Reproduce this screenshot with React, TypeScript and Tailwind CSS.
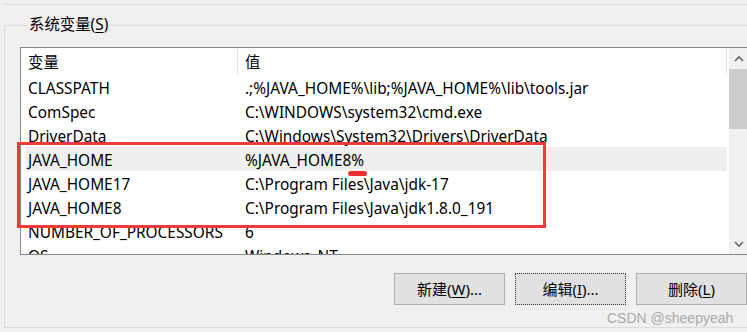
import React from 'react';

type Row = { name: string; value: string };

const ROWS: Row[] = [
  { name: 'CLASSPATH', value: '.;%JAVA_HOME%\\lib;%JAVA_HOME%\\lib\\tools.jar' },
  { name: 'ComSpec', value: 'C:\\WINDOWS\\system32\\cmd.exe' },
  { name: 'DriverData', value: 'C:\\Windows\\System32\\Drivers\\DriverData' },
  { name: 'JAVA_HOME', value: '%JAVA_HOME8%' },
  { name: 'JAVA_HOME17', value: 'C:\\Program Files\\Java\\jdk-17' },
  { name: 'JAVA_HOME8', value: 'C:\\Program Files\\Java\\jdk1.8.0_191' },
  { name: 'NUMBER_OF_PROCESSORS', value: '6' },
  { name: 'OS', value: 'Windows_NT' },
];

const Chevron = ({ up }: { up?: boolean }) => (
  <svg width="10" height="6" viewBox="0 0 10 6" className="block">
    <path
      d={up ? 'M1 5 L5 1 L9 5' : 'M1 1 L5 5 L9 1'}
      fill="none"
      stroke="#606060"
      strokeWidth="1.6"
    />
  </svg>
);

const Button = ({ label, hotkey, tail, focused }: { label: string; hotkey: string; tail: string; focused?: boolean }) => (
  <button
    className={`h-[32px] w-[111px] shrink-0 bg-[#e1e1e1] text-[15px] text-black flex items-center justify-center ${
      focused ? 'border border-dotted border-[#333]' : 'border border-[#adadad]'
    }`}
  >
    {label}(<span className="underline underline-offset-2">{hotkey}</span>){tail}
  </button>
);

const App: React.FC = () => {
  return (
    <div
      className="relative w-[747px] h-[332px] overflow-hidden bg-[#f0f0f0] text-black"
      style={{ fontFamily: '"Noto Sans", "Noto Sans CJK SC", sans-serif' }}
    >
      {/* previous group box edge */}
      <div className="h-[5px] ml-[4px] border-b border-[#dcdcdc]" />

      <fieldset className="mt-[10px] ml-[4px] w-[780px] h-[313px] border border-[#dcdcdc] pl-[15px] pr-0">
        <legend className="ml-[8px] px-[1px] text-[15.4px] leading-[20px]">
          系统变量(<span className="underline underline-offset-2">S</span>)
        </legend>

        <div className="mt-[12px] h-[208px] w-[760px] border border-[#828790] bg-white flex overflow-hidden">
          <div className="w-[706px] shrink-0 text-[15.4px] leading-[20px]">
            {/* header */}
            <div className="h-[27px] flex">
              <div className="w-[217px] h-full pl-[7px] pt-[5px] border-r border-[#e5e5e5]">变量</div>
              <div className="flex-1 h-full pl-[7px] pt-[5px] border-r border-[#e5e5e5]">值</div>
            </div>
            {ROWS.map((r) => (
              <div
                key={r.name}
                className={`h-[24px] ml-[5px] pt-[4px] flex ${r.name === 'JAVA_HOME' ? 'bg-[#efefef]' : ''}`}
              >
                <div className="w-[212px] pl-[2px] whitespace-nowrap">{r.name}</div>
                <div className="pl-[7px] whitespace-nowrap">{r.value}</div>
              </div>
            ))}
          </div>
          <div className="w-[2px] shrink-0" />
          <div className="w-[20px] shrink-0 bg-[#f0f0f0] flex flex-col">
            <div className="h-[21px] flex items-center justify-center">
              <Chevron up />
            </div>
            <div className="h-[60px] bg-[#cdcdcd]" />
            <div className="flex-1" />
            <div className="h-[21px] flex items-center justify-center">
              <Chevron />
            </div>
          </div>
        </div>

        <div className="mt-[18px] ml-[374px] flex gap-[10px]">
          <Button label="新建" hotkey="W" tail="..." />
          <Button label="编辑" hotkey="I" tail="..." focused />
          <Button label="删除" hotkey="L" tail="" />
        </div>
      </fieldset>

      {/* annotation overlay */}
      <div className="absolute left-[17px] top-[142px] w-[529px] h-[86px] border-[3px] border-[#f03a3a]" />
      <div className="absolute left-[348px] top-[171px] w-[19px] h-[5px] rounded-full bg-[#f03030]" />

      <div
        className="absolute left-[607px] top-[309px] text-[14px] leading-[18px] text-[#a9a9a9]"
        style={{ fontFamily: '"Liberation Sans", Arial, sans-serif' }}
      >
        CSDN @sheepyeah
      </div>
    </div>
  );
};

export default App;
